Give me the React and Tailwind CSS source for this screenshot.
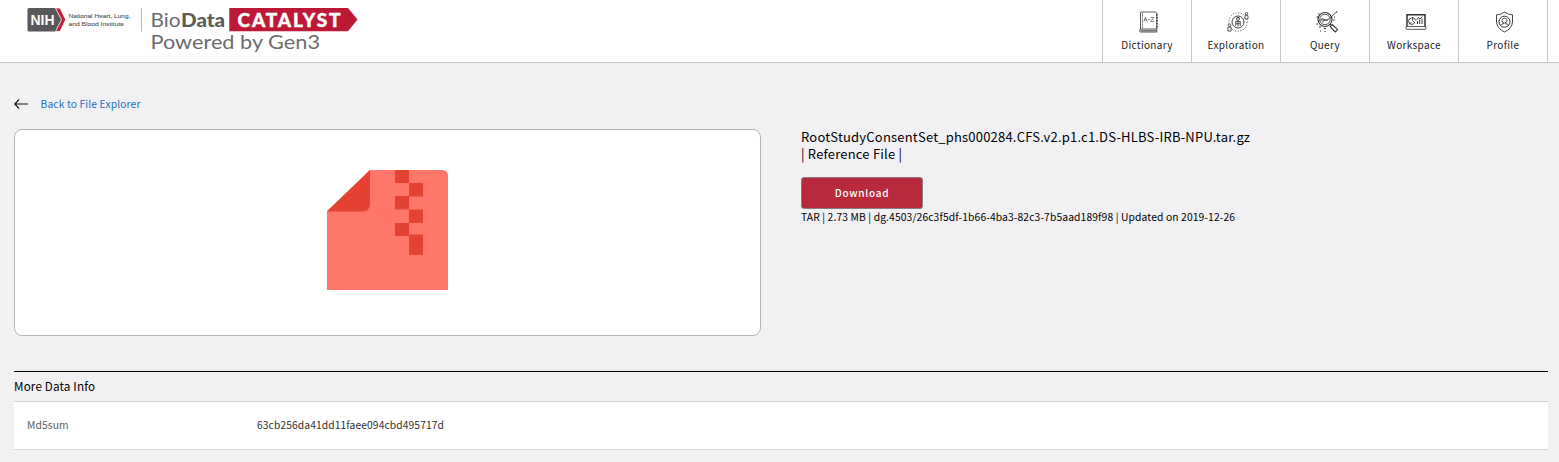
import React from "react";

function Logo() {
  return (
    <svg width="334" height="50" viewBox="26 5 334 50" className="block">
      <path d="M29 8H56L64 19.500L56 31.500H29Q27.500 31.500 27.500 30V9.500Q27.500 8 29 8Z" fill="#58595b" />
      <path d="M55.500 8H60L65.700 19.700L60 31.500H55.500L61.500 19.700Z" fill="#c11f3a" stroke="#fff" strokeWidth="0.800" />
      <text x="30.500" y="25.200" textLength="24" lengthAdjust="spacingAndGlyphs" fontFamily="Liberation Sans, sans-serif" fontWeight="700" fontSize="15" fill="#fff">NIH</text>
      <g fontFamily="Liberation Sans, sans-serif" fontSize="6.200" fill="#58595b" stroke="#58595b" strokeWidth="0.100">
        <text x="68.500" y="18.200" textLength="62" lengthAdjust="spacingAndGlyphs">National Heart, Lung,</text>
        <text x="68.500" y="26.200" textLength="55.500" lengthAdjust="spacingAndGlyphs">and Blood Institute</text>
      </g>
      <path d="M141.500 8V31.500" stroke="#e3a2ad" strokeWidth="1" />
      <g fontFamily="Lato, sans-serif" fill="#6b6c6e">
        <text x="150.500" y="26.700" textLength="30" lengthAdjust="spacingAndGlyphs" fontSize="19.500">Bio</text>
        <text x="181" y="26.700" textLength="44" lengthAdjust="spacingAndGlyphs" fontSize="19.500" fontWeight="900" fill="#5a5b5d">Data</text>
        <text x="150.500" y="48.700" textLength="169.500" lengthAdjust="spacingAndGlyphs" fontSize="20">Powered by Gen3</text>
      </g>
      <path d="M229.300 8H348L357.500 19.500L348 31.300H229.300Z" fill="#bd1835" />
      <text x="237.500" y="26.500" textLength="103" lengthAdjust="spacing" fontFamily="Lato, sans-serif" fontSize="19" fontWeight="900" fill="#fff" stroke="#fff" strokeWidth="0.400">CATALYST</text>
    </svg>
  );
}

const iconProps = {
  width: 22,
  height: 22,
  viewBox: "0 0 22 22",
  fill: "none",
  stroke: "#303030",
  strokeWidth: 0.8,
};

function DictionaryIcon() {
  return (
    <svg {...iconProps}>
      <path d="M2.500 1V18.500M3 1H17.500Q18.800 1 18.800 2.500V18H3Q1.500 18.200 1.500 20Q1.700 21 3 21H18.800V18" />
      <path d="M4.500 2V17.500" strokeWidth="0.500" />
      <path d="M3 19.700H18.500" strokeWidth="1.800" stroke="#777" />
      <path d="M19 3V17" strokeWidth="1.400" strokeDasharray="1.500 1.500" />
      <path d="M5.800 10.500L7.500 6.300L9.200 10.500M6.300 9H8.700M10 8.600H11.900M12.700 6.500H16L12.700 10.300H16.200" strokeWidth="0.600" />
    </svg>
  );
}

function ExplorationIcon() {
  return (
    <svg {...iconProps}>
      <circle cx="11" cy="11" r="9.200" strokeDasharray="1.200 1.500" strokeWidth="0.700" />
      <circle cx="11" cy="11" r="6" strokeWidth="0.900" />
      <circle cx="11" cy="8" r="1.500" />
      <path d="M9.200 7.500Q11 5 12.800 7.500M8.700 15V10.500H13.300V15M11 10.500V15.500M9 12.700H13" />
      <g fill="#fff">
        <circle cx="19.500" cy="2.800" r="1.300" />
        <path d="M18 8V4.800Q19.500 4 21 4.800V8Z" />
        <circle cx="2.500" cy="14.300" r="1.300" />
        <path d="M.900 20V16.500Q2.500 15.600 4.100 16.500V20Z" />
      </g>
    </svg>
  );
}

function QueryIcon() {
  return (
    <svg {...iconProps}>
      <circle cx="9" cy="8.500" r="7" strokeWidth="1.100" />
      <circle cx="9" cy="8.500" r="5.200" strokeWidth="0.800" />
      <path d="M13.800 13L15.300 14.300M14.200 15.800L16.300 13.500L21.600 18.600L19.300 21Z" strokeWidth="1.100" />
      <path d="M2 11L6.500 7.500L10 9.500L13.500 7.500L20.500 1M5 9H12M6 11.500L9 9" />
      <path d="M.500 6H2M.500 13H2M3 16H5M8 17.500H10M4 20H5M8.500 20.500H9.500M17 9H18.500M18 6H19M2 3H3.500M20 1H21.500" strokeWidth="1.200" />
    </svg>
  );
}

function WorkspaceIcon() {
  return (
    <svg {...iconProps}>
      <path d="M2 15V3.800H20V15" strokeWidth="1.500" />
      <path d="M1 15.500H20.800V17.500Q20.800 18.300 20 18.300H2Q1 18.300 1 17.500Z" />
      <path d="M6.500 7A3.200 3.200 0 1 0 9.700 11.500M7.500 6V9.500L10 12M7.500 6.500A3.500 3.500 0 0 1 10.500 9.500M12.500 13V10M14.700 13V8.500M17 13V7.500M11.500 9L13.500 6.500L15 8L17.500 5.500M4 13.500L6.500 11" strokeWidth="0.900" />
    </svg>
  );
}

function ProfileIcon() {
  return (
    <svg {...iconProps}>
      <path d="M10.500 1Q14 3.800 18.500 3.800V11Q18 17.500 10.500 21Q3 17.500 2.500 11V3.800Q7 3.800 10.500 1Z" strokeWidth="0.900" />
      <circle cx="10.500" cy="10.700" r="5.500" strokeWidth="1" />
      <circle cx="10.500" cy="9.600" r="2.500" />
      <path d="M6.500 14.500Q7 13 9.300 12.700V11.700M14.500 14.500Q14 13 11.700 12.700V11.700" strokeWidth="0.900" />
    </svg>
  );
}

const navItems = [
  ["Dictionary", DictionaryIcon],
  ["Exploration", ExplorationIcon],
  ["Query", QueryIcon],
  ["Workspace", WorkspaceIcon],
  ["Profile", ProfileIcon],
];

function ArchiveIcon() {
  return (
    <svg width="121" height="120" viewBox="0 0 121 120" className="mt-10">
      <path d="M43 0H115Q121 0 121 6V120H0V41Z" fill="#ff776b" />
      <path d="M43 0V34Q43 41.500 35 41.500H0Z" fill="#e44233" />
      <path d="M68 0H82V13H96V26.500H82V39.500H96V53H82V64.500H96V85H82V66H68V53H82V39.500H68V26H82V13H68Z" fill="#e44233" />
    </svg>
  );
}

export default function App() {
  return (
    <div className="flex h-[462px] flex-col bg-[#f1f1f4] font-['Noto_Sans_CJK_SC',sans-serif] text-black">
      <header className="flex h-[63px] shrink-0 justify-between border-b border-[#c6c6c6] bg-white pr-[11px]">
        <div className="pt-[5px] pl-[26px]">
          <Logo />
        </div>
        <nav className="flex border-r border-[#c6c6c6]">
          {navItems.map(([label, Icon]) => (
            <a key={label} className="flex w-[89px] flex-col items-center border-l border-[#c6c6c6] pt-[11px]">
              <span className="pl-[3px]">
                <Icon />
              </span>
              <span className="mt-[4px] text-[10px] leading-4 tracking-[0.32px] text-[#222]">{label}</span>
            </a>
          ))}
        </nav>
      </header>

      <main className="flex flex-col pr-[11px] pl-[14px]">
        <a className="mt-[32px] flex h-[18px] items-center text-[10.3px] leading-[18px] tracking-[0.12px] text-[#1f70b8]">
          <svg width="14" height="10" viewBox="0 0 14 10" className="mr-[12.500px] -mt-px" fill="none" stroke="#111" strokeWidth="1.100">
            <path d="M5 .500L.800 5L5 9.500M.800 5H14" />
          </svg>
          Back to File Explorer
        </a>
        <div className="mt-[16px] flex">
          <div className="flex h-[207px] w-[747px] items-start justify-center rounded-lg border border-[#b4b4b4] bg-white">
            <ArchiveIcon />
          </div>
          <section className="ml-10 flex flex-col items-start">
            <h1 className="-mt-px text-[13px] leading-[17px] tracking-[0.2px]">
              RootStudyConsentSet_phs000284.CFS.v2.p1.c1.DS-HLBS-IRB-NPU.tar.gz
              <br />| Reference File |
            </h1>
            <button className="mt-[15px] flex h-8 w-[122px] items-center justify-center rounded-[3px] border border-[#8d7d82] bg-[#b82a3b] pb-[2px] text-[10px] font-medium tracking-[0.75px] text-white">
              Download
            </button>
            <p className="text-[10.3px] leading-4 tracking-[0.12px]">
              TAR | 2.73 MB | dg.4503/26c3f5df-1b66-4ba3-82c3-7b5aad189f98 | Updated on 2019-12-26
            </p>
          </section>
        </div>
        <section className="mt-[35px] border-t border-black">
          <h2 className="h-[29px] text-[11.700px] leading-[28px] tracking-[0.15px]">More Data Info</h2>
          <div className="flex h-[49px] items-center border-y border-[#d4d4d4] bg-white pb-px pl-[13px] text-[10.3px] leading-4 tracking-[0.09px]">
            <span className="w-[230px] text-[#606060]">Md5sum</span>
            <span className="text-[#303030]">63cb256da41dd11faee094cbd495717d</span>
          </div>
        </section>
      </main>
    </div>
  );
}
